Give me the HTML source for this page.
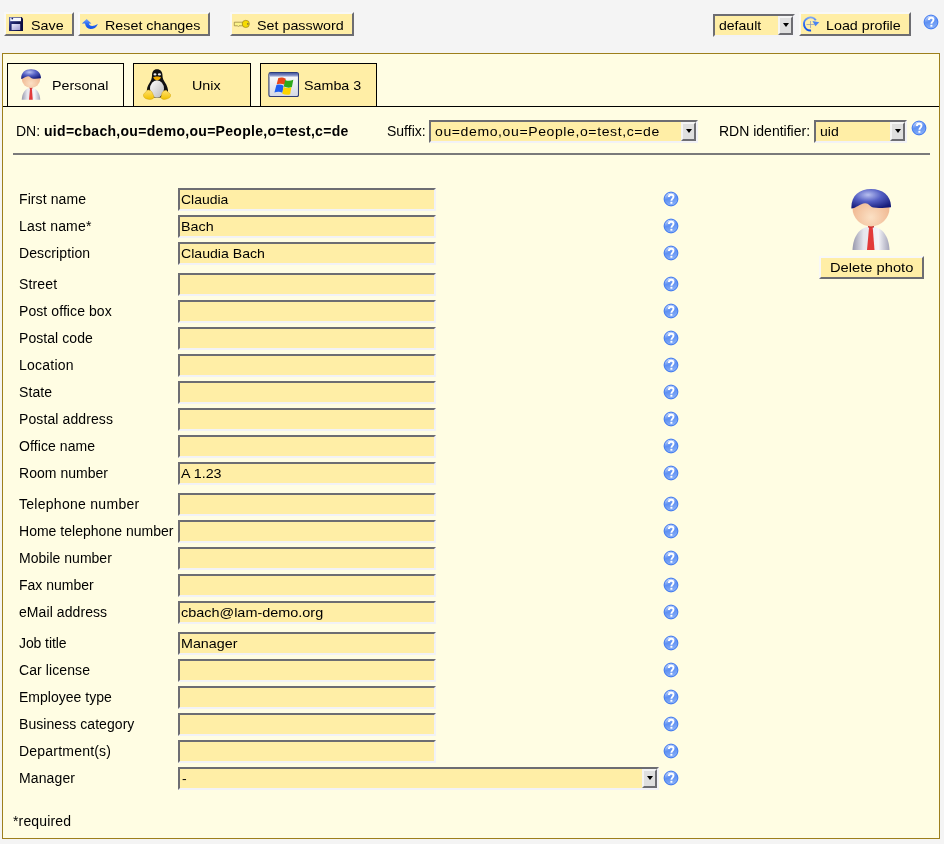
<!DOCTYPE html>
<html><head><meta charset="utf-8"><style>
html,body{margin:0;padding:0}
body{-webkit-font-smoothing:antialiased;width:944px;height:844px;background:#f4f4f4;position:relative;overflow:hidden;font-family:"Liberation Sans",sans-serif;font-size:13px;color:#000}
.a{position:absolute;white-space:nowrap;will-change:transform}
.btn{position:absolute;box-sizing:border-box;height:24px;top:12px;background:#ffeea6;border:2px solid;border-color:#f8f8f8 #6d6d72 #6d6d72 #f8f8f8}
.btn span{position:absolute;will-change:transform;top:4px;font-size:13px;line-height:16px;transform:scaleX(1.1);transform-origin:0 0}
.btn svg{position:absolute}
.box{position:absolute;left:2px;top:53px;width:938px;height:786px;box-sizing:border-box;border:1px solid #9d7f1c;background:#fffde3}
.tab{position:absolute;top:63px;height:44px;box-sizing:border-box;border:1px solid #000;border-bottom:none;background:#ffeea6}
.tab span{position:absolute;will-change:transform;top:14px;font-size:13px;line-height:16px;transform:scaleX(1.1);transform-origin:0 0}
.tabline{position:absolute;left:3px;top:106px;width:936px;height:1px;background:#000}
.inp{position:absolute;box-sizing:border-box;height:23px;width:258px;left:178px;background:#ffeea6;border:2px solid;border-color:#6d6d72 #f2f2f6 #f2f2f6 #6d6d72}
.inp span{position:absolute;will-change:transform;left:1px;top:2px;font-size:13px;line-height:16px;transform:scaleX(1.1);transform-origin:0 0}
.lbl{position:absolute;will-change:transform;left:19px;font-size:14px;line-height:16px;white-space:nowrap;letter-spacing:0.15px}
.help{position:absolute;left:663px;width:16px;height:16px}
.sel{position:absolute;box-sizing:border-box;height:23px;background:#ffeea6;border:2px solid;border-color:#6d6d72 #f2f2f6 #f2f2f6 #6d6d72}
.sel span{position:absolute;will-change:transform;left:4px;top:2px;font-size:13px;line-height:16px;transform:scaleX(1.08);transform-origin:0 0}
.dd{position:absolute;right:0;top:0;width:15px;height:19px;box-sizing:border-box;background:#dfdfdf;border:2px solid;border-color:#f4f4f4 #6d6d72 #6d6d72 #f4f4f4}
.dd:after{content:"";position:absolute;left:3px;top:5px;border-left:3px solid transparent;border-right:3px solid transparent;border-top:4px solid #000}
</style></head><body>
<svg width="0" height="0" style="position:absolute">
<defs>
<linearGradient id="hg" x1="0.3" y1="0" x2="0.6" y2="1"><stop offset="0" stop-color="#d0defc"/><stop offset="0.45" stop-color="#5e90f2"/><stop offset="1" stop-color="#8cb2f8"/></linearGradient>
<symbol id="help" viewBox="0 0 16 16"><circle cx="8" cy="8" r="6.9" fill="url(#hg)" stroke="#3b76f0" stroke-width="1"/><path d="M5.9 6.1 C5.9 4.4 6.9 3.7 8.2 3.7 C9.6 3.7 10.5 4.6 10.5 5.8 C10.5 7.5 8.4 7.7 8.4 9.7" fill="none" stroke="#fff" stroke-width="1.9"/><rect x="7.4" y="10.8" width="2" height="1.9" fill="#fff"/></symbol>

<linearGradient id="flopg" x1="0" y1="0" x2="1" y2="0.3"><stop offset="0" stop-color="#6a78b8"/><stop offset="0.25" stop-color="#262c78"/><stop offset="1" stop-color="#0a0c40"/></linearGradient>
<linearGradient id="flop2" x1="0" y1="0" x2="1" y2="1"><stop offset="0" stop-color="#ecebfa"/><stop offset="1" stop-color="#9c98d0"/></linearGradient>
<linearGradient id="arrg" x1="0" y1="0" x2="0" y2="1"><stop offset="0" stop-color="#7aa4f8"/><stop offset="0.5" stop-color="#2a6af2"/><stop offset="1" stop-color="#0f50e8"/></linearGradient>
<radialGradient id="hairg" cx="0.42" cy="0.3" r="0.75"><stop offset="0" stop-color="#b8c0f0"/><stop offset="0.45" stop-color="#5560c4"/><stop offset="1" stop-color="#141a78"/></radialGradient>
<radialGradient id="faceg" cx="0.5" cy="0.75" r="0.6"><stop offset="0" stop-color="#fbe0c4"/><stop offset="1" stop-color="#efb48c"/></radialGradient>
<linearGradient id="bodyg" x1="0" y1="0" x2="1" y2="0"><stop offset="0" stop-color="#9898ac"/><stop offset="0.3" stop-color="#e6e6ee"/><stop offset="0.7" stop-color="#f4f4f8"/><stop offset="1" stop-color="#a4a4b8"/></linearGradient>
<symbol id="person" viewBox="0 0 40 61">
<path d="M1.5 61 C2 47 9 37.5 20 37.5 C31 37.5 38 47 38.5 61 Z" fill="url(#bodyg)"/>
<path d="M18.2 37 L21.6 37 L23.5 61 L16 61 Z" fill="#e23a3a"/>
<rect x="17" y="36" width="6" height="2.5" fill="#c82828"/>
<circle cx="20" cy="19" r="18.5" fill="url(#faceg)"/>
<path d="M0.4 19.6 C-0.2 7 8 0 20 0 C32 0 40.3 7 40 18.2 C35 18.6 28 19.6 22.5 18.6 C19.2 18 17.8 14 14 14.2 C9 14.6 5 19.2 0.4 19.6 Z" fill="url(#hairg)"/>
</symbol>
<linearGradient id="bellyg" x1="0" y1="0" x2="1" y2="1"><stop offset="0" stop-color="#ffffff"/><stop offset="1" stop-color="#b8b8b8"/></linearGradient>
<linearGradient id="footg" x1="0" y1="0" x2="0" y2="1"><stop offset="0" stop-color="#ffe070"/><stop offset="1" stop-color="#f2c200"/></linearGradient>
<symbol id="tux" viewBox="0 0 28 31">
<path d="M14 0.3 C10.5 0.3 9 3 9 6.5 C9 9.5 8 11.5 6.5 14 C4.5 17 3.5 20 4 23.5 L10 28.5 L19 28.5 L25 24 C25.5 20 24 16.5 22 13.5 C20.5 11 19.5 9.5 19.5 6.5 C19.5 3 17.5 0.3 14 0.3 Z" fill="#111"/>
<ellipse cx="14" cy="19.8" rx="7" ry="8.6" fill="url(#bellyg)"/>
<ellipse cx="12" cy="5.4" rx="1.5" ry="1.1" fill="#e8e8e8"/><ellipse cx="16.4" cy="5.4" rx="1.6" ry="1.1" fill="#e8e8e8"/>
<path d="M10.2 8.3 C11.8 7.2 16.4 7.2 18 8.3 C17.3 10.2 15.8 11.2 14.1 11.2 C12.4 11.2 10.9 10.2 10.2 8.3 Z" fill="#f2ac00"/>
<path d="M0.3 25.5 L4.6 21 C6.2 20.6 8 21.4 9 23 L11.2 28 C10.2 30.6 7 31 4 30 C1.8 29.4 0.3 28.2 0.3 25.5 Z" fill="url(#footg)" stroke="#c89800" stroke-width="0.4"/>
<path d="M27.8 25.8 L23.6 21.4 C22 21 20 22 19.2 23.6 L17.8 28.4 C18.8 30.8 21.8 30.8 24.2 29.8 C26.2 29.2 27.8 28.2 27.8 25.8 Z" fill="url(#footg)" stroke="#c89800" stroke-width="0.4"/>
</symbol>
<linearGradient id="titleg" x1="0" y1="0" x2="0" y2="1"><stop offset="0" stop-color="#3a4e9c"/><stop offset="1" stop-color="#b4bce0"/></linearGradient>
<linearGradient id="wing" x1="0" y1="0" x2="0" y2="1"><stop offset="0" stop-color="#ffffff"/><stop offset="1" stop-color="#d4d8e4"/></linearGradient>
<symbol id="win" viewBox="0 0 31 25">
<rect x="0.9" y="0.6" width="29.6" height="24" rx="1.8" fill="url(#wing)" stroke="#2e3c78" stroke-width="1.1"/>
<rect x="1.4" y="1.1" width="28.6" height="3.6" fill="url(#titleg)"/>
<g transform="translate(0 0.5)"><path d="M10.3 5.6 C12.5 4.5 15.5 5 17.8 6.3 L16.6 12.3 C14 11 11 11 8.7 11.8 Z" fill="#e8461a"/>
<path d="M17.2 7.4 C19.5 8.6 22.5 8.6 25.3 7.2 L23.9 14.6 C21.2 15.6 18.5 15.1 15.8 14 Z" fill="#2ea81c"/>
<path d="M8.4 12.4 C10.8 11.6 13.4 11.8 15.6 13.2 L14.4 20.2 C11.8 19 9 19.2 6.4 20 Z" fill="#1e5ef0"/>
<path d="M15.6 14.6 C18.2 15.7 20.8 16 23.4 14.8 L22.2 21.8 C19.6 22.8 16.8 22.4 14.3 21.2 Z" fill="#fcd400"/></g>
</symbol>
</defs></svg>

<!-- top buttons -->
<div class="btn" style="left:4px;width:70px"><svg style="left:3px;top:3px" width="14" height="14" viewBox="0 0 14 14"><path d="M0 0 H12.6 L14 1.4 V14 H0 Z" fill="url(#flopg)"/><rect x="1.2" y="0.6" width="10.8" height="3.6" fill="#f6f8ff"/><circle cx="3.3" cy="1.6" r="0.9" fill="#1c2466"/><rect x="2.6" y="7" width="8.6" height="6" fill="url(#flop2)"/></svg><span style="left:25px">Save</span></div>
<div class="btn" style="left:78px;width:132px"><svg style="left:0px;top:1px" width="20" height="18" viewBox="0 0 20 18"><path d="M6.7 4 L11.4 8.6 L8.8 8.6 C9.5 11.2 12.8 12 17.9 9 C16.6 12.6 13.6 14.1 10.6 14.1 C7.6 14.1 5.5 12 5 8.6 L1.9 8.6 Z" fill="url(#arrg)"/></svg><span style="left:25px">Reset changes</span></div>
<div class="btn" style="left:230px;width:124px"><svg style="left:0px;top:0px" width="20" height="18" viewBox="0 0 20 18"><path d="M2.3 8.2 H10.5 V11.8 H7 L6.3 12.5 L5.6 11.8 H2.3 Z" fill="#fbf38a" stroke="#8f7c3a" stroke-width="0.7"/><circle cx="13.8" cy="9.9" r="3.6" fill="#f6dc00" stroke="#9c8420" stroke-width="0.7"/><rect x="15" y="9.1" width="1.6" height="1.6" fill="#8c7a3a"/></svg><span style="left:25px">Set password</span></div>
<div class="sel" style="left:713px;top:14px;width:82px;height:23px"><span>default</span><div class="dd"></div></div>
<div class="btn" style="left:799px;width:112px"><svg style="left:0px;top:1px" width="20" height="18" viewBox="0 0 20 18"><path d="M9.5 6 V13 M5.5 9.5 H13.5" stroke="#8a96b4" stroke-width="0.7"/><path d="M10.07 15.48 A6.5 6.5 0 1 1 14.8 5.27" fill="none" stroke="url(#arrg)" stroke-width="2"/><path d="M11.4 6.1 L18.3 7.2 L14.4 11.2 Z" fill="#4a84f2"/></svg><span style="left:25px">Load profile</span></div>
<svg class="a" style="left:923px;top:14px" width="16" height="16"><use href="#help"/></svg>

<!-- container -->
<div class="box"></div>
<div class="tab" style="left:7px;width:117px;background:#fffde3"><svg class="a" style="left:13px;top:5px" width="20" height="31"><use href="#person"/></svg><span style="left:44px">Personal</span></div>
<div class="tab" style="left:133px;width:118px"><svg class="a" style="left:9px;top:5px" width="28" height="31"><use href="#tux"/></svg><span style="left:58px">Unix</span></div>
<div class="tab" style="left:260px;width:117px"><svg class="a" style="left:7px;top:8px" width="31" height="26" viewBox="0 0 31 26"><use href="#win" width="31" height="25"/></svg><span style="left:43px">Samba 3</span></div>
<div class="tabline"></div>

<div class="a" style="left:16px;top:123px;font-size:14px;line-height:16px">DN: <b style="letter-spacing:0.3px">uid=cbach,ou=demo,ou=People,o=test,c=de</b></div>
<div class="a" style="left:387px;top:123px;font-size:14px;line-height:16px">Suffix:</div>
<div class="sel" style="left:429px;top:120px;width:269px;height:23px"><span style="letter-spacing:0.55px">ou=demo,ou=People,o=test,c=de</span><div class="dd"></div></div>
<div class="a" style="left:719px;top:123px;font-size:14px;line-height:16px">RDN identifier:</div>
<div class="sel" style="left:814px;top:120px;width:93px;height:23px"><span>uid</span><div class="dd"></div></div>
<svg class="a" style="left:911px;top:120px" width="16" height="16"><use href="#help"/></svg>
<div class="a" style="left:13px;top:153px;width:917px;height:2px;background:#7a7a7a"></div>

<!-- form -->
<div class="lbl" style="top:191px;letter-spacing:0.09px">First name</div><div class="inp" style="top:188px"><span style="transform:scaleX(1.075)">Claudia</span></div><svg class="help" style="top:191px"><use href="#help"/></svg>
<div class="lbl" style="top:218px;letter-spacing:0.17px">Last name*</div><div class="inp" style="top:215px"><span>Bach</span></div><svg class="help" style="top:218px"><use href="#help"/></svg>
<div class="lbl" style="top:245px;letter-spacing:0.11px">Description</div><div class="inp" style="top:242px"><span style="transform:scaleX(1.085)">Claudia Bach</span></div><svg class="help" style="top:245px"><use href="#help"/></svg>
<div class="lbl" style="top:276px;letter-spacing:0.15px">Street</div><div class="inp" style="top:273px"></div><svg class="help" style="top:276px"><use href="#help"/></svg>
<div class="lbl" style="top:303px;letter-spacing:0.08px">Post office box</div><div class="inp" style="top:300px"></div><svg class="help" style="top:303px"><use href="#help"/></svg>
<div class="lbl" style="top:330px;letter-spacing:0.06px">Postal code</div><div class="inp" style="top:327px"></div><svg class="help" style="top:330px"><use href="#help"/></svg>
<div class="lbl" style="top:357px;letter-spacing:0.24px">Location</div><div class="inp" style="top:354px"></div><svg class="help" style="top:357px"><use href="#help"/></svg>
<div class="lbl" style="top:384px;letter-spacing:0.10px">State</div><div class="inp" style="top:381px"></div><svg class="help" style="top:384px"><use href="#help"/></svg>
<div class="lbl" style="top:411px;letter-spacing:0.10px">Postal address</div><div class="inp" style="top:408px"></div><svg class="help" style="top:411px"><use href="#help"/></svg>
<div class="lbl" style="top:438px;letter-spacing:0.09px">Office name</div><div class="inp" style="top:435px"></div><svg class="help" style="top:438px"><use href="#help"/></svg>
<div class="lbl" style="top:465px;letter-spacing:0.03px">Room number</div><div class="inp" style="top:462px"><span>A 1.23</span></div><svg class="help" style="top:465px"><use href="#help"/></svg>
<div class="lbl" style="top:496px;letter-spacing:0.28px">Telephone number</div><div class="inp" style="top:493px"></div><svg class="help" style="top:496px"><use href="#help"/></svg>
<div class="lbl" style="top:523px;letter-spacing:0.02px">Home telephone number</div><div class="inp" style="top:520px"></div><svg class="help" style="top:523px"><use href="#help"/></svg>
<div class="lbl" style="top:550px;letter-spacing:0.02px">Mobile number</div><div class="inp" style="top:547px"></div><svg class="help" style="top:550px"><use href="#help"/></svg>
<div class="lbl" style="top:577px;letter-spacing:0.01px">Fax number</div><div class="inp" style="top:574px"></div><svg class="help" style="top:577px"><use href="#help"/></svg>
<div class="lbl" style="top:604px;letter-spacing:0.08px">eMail address</div><div class="inp" style="top:601px"><span style="transform:scaleX(1.11)">cbach@lam-demo.org</span></div><svg class="help" style="top:604px"><use href="#help"/></svg>
<div class="lbl" style="top:635px;letter-spacing:-0.09px">Job title</div><div class="inp" style="top:632px"><span>Manager</span></div><svg class="help" style="top:635px"><use href="#help"/></svg>
<div class="lbl" style="top:662px;letter-spacing:0.09px">Car license</div><div class="inp" style="top:659px"></div><svg class="help" style="top:662px"><use href="#help"/></svg>
<div class="lbl" style="top:689px;letter-spacing:0.02px">Employee type</div><div class="inp" style="top:686px"></div><svg class="help" style="top:689px"><use href="#help"/></svg>
<div class="lbl" style="top:716px;letter-spacing:0.06px">Business category</div><div class="inp" style="top:713px"></div><svg class="help" style="top:716px"><use href="#help"/></svg>
<div class="lbl" style="top:743px;letter-spacing:0.21px">Department(s)</div><div class="inp" style="top:740px"></div><svg class="help" style="top:743px"><use href="#help"/></svg>
<div class="lbl" style="top:770px;letter-spacing:0.12px">Manager</div><div class="sel" style="left:178px;top:767px;width:481px"><span style="left:2px">-</span><div class="dd"></div></div><svg class="help" style="top:770px"><use href="#help"/></svg>

<div class="a" style="left:13px;top:813px;font-size:14px;line-height:16px;letter-spacing:0.15px">*required</div>

<!-- photo -->
<svg class="a" style="left:851px;top:189px" width="40" height="61"><use href="#person"/></svg>
<div class="btn" style="left:819px;top:256px;width:105px;height:23px"><span style="left:9px;top:2px;transform:scaleX(1.13)">Delete photo</span></div>
</body></html>
